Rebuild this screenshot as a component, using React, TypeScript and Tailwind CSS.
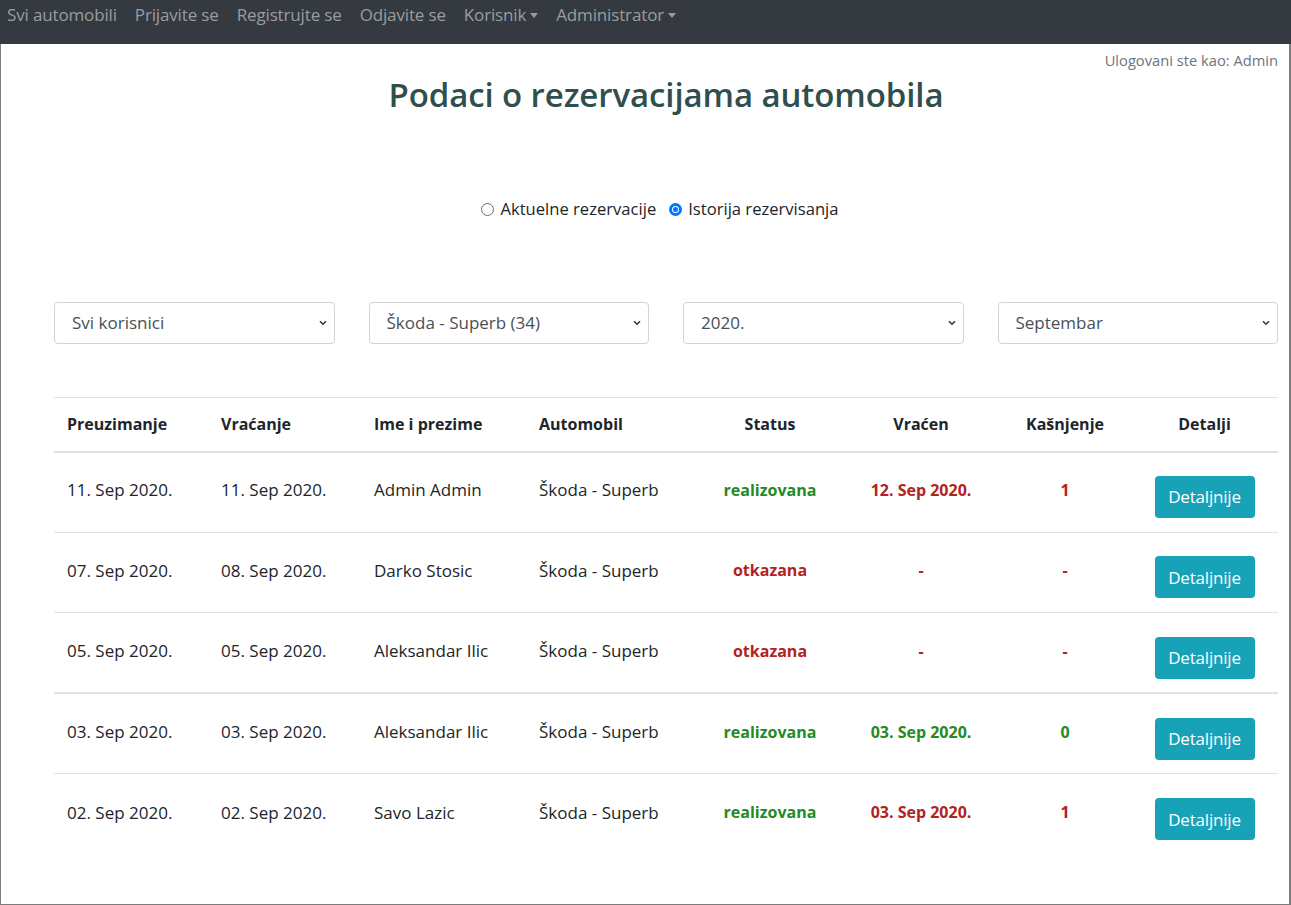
import React from "react";

const rows = [
  { from: "11. Sep 2020.", to: "11. Sep 2020.", name: "Admin Admin", status: "realizovana", returned: "12. Sep 2020.", late: "1", ok: false },
  { from: "07. Sep 2020.", to: "08. Sep 2020.", name: "Darko Stosic", status: "otkazana", returned: "-", late: "-", ok: false },
  { from: "05. Sep 2020.", to: "05. Sep 2020.", name: "Aleksandar Ilic", status: "otkazana", returned: "-", late: "-", ok: false },
  { from: "03. Sep 2020.", to: "03. Sep 2020.", name: "Aleksandar Ilic", status: "realizovana", returned: "03. Sep 2020.", late: "0", ok: true },
  { from: "02. Sep 2020.", to: "02. Sep 2020.", name: "Savo Lazic", status: "realizovana", returned: "03. Sep 2020.", late: "1", ok: false },
];

function Select({ value }: { value: string }) {
  return (
    <div className="relative">
      <select className="w-full h-[42px] appearance-none rounded-[4px] border border-[#ced4da] bg-white pl-[17px] text-[17px] text-[#495057]">
        <option>{value}</option>
      </select>
      <svg className="absolute right-[8px] top-[18px] pointer-events-none" width="8" height="6" viewBox="0 0 8 6">
        <path d="M1 1.2 L4 4.2 L7 1.2" fill="none" stroke="#343a40" strokeWidth="1.6" />
      </svg>
    </div>
  );
}

function Caret() {
  return <span className="inline-block ml-[4px] align-[3px] border-x-[4px] border-x-transparent border-t-[5px] border-t-[#9a9da0]" />;
}

export default function App() {
  return (
    <div className="bg-white h-[905px] flex flex-col" style={{ fontFamily: '"Open Sans", "Noto Sans", sans-serif' }}>
      <nav className="h-[44px] shrink-0 bg-[#343a40] flex items-start pl-[7px] gap-[18px] text-[17px] leading-[30px] text-[#9a9da0] tracking-[-0.15px]">
        <span>Svi automobili</span>
        <span>Prijavite se</span>
        <span>Registrujte se</span>
        <span>Odjavite se</span>
        <span>Korisnik<Caret /></span>
        <span>Administrator<Caret /></span>
      </nav>
      <main className="flex-1 border-l border-r-2 border-b border-[#7d7d7d] pl-[53px] pr-[11px]">
        <p className="mt-[6px] text-right text-[14.7px] leading-[20px] text-[#6c757d]">Ulogovani ste kao: Admin</p>
        <h1 className="mt-[5px] text-center text-[33px] leading-[40px] font-semibold text-[#2f4f4f] tracking-[-0.1px]">
          Podaci o rezervacijama automobila
        </h1>
        <div className="mt-[84px] flex justify-center items-center gap-[13px] text-[16.6px] leading-[20px] text-[#212529] pr-[12px]">
          <label className="flex items-center gap-[6px]">
            <span className="w-[13px] h-[13px] rounded-full border border-[#6b6b6b] bg-white" />
            Aktuelne rezervacije
          </label>
          <label className="flex items-center gap-[6px]">
            <span className="w-[13px] h-[13px] rounded-full bg-[#0075ff] flex items-center justify-center">
              <span className="w-[7px] h-[7px] rounded-full bg-white flex items-center justify-center">
                <span className="w-[5px] h-[5px] rounded-full bg-[#0075ff]" />
              </span>
            </span>
            Istorija rezervisanja
          </label>
        </div>
        <div className="mt-[83px] grid grid-cols-4 gap-x-[34px]">
          <Select value="Svi korisnici" />
          <Select value="Škoda - Superb (34)" />
          <Select value="2020." />
          <Select value="Septembar" />
        </div>
        <table className="mt-[53px] w-full table-fixed border-collapse text-[17px] text-[#212529]">
          <colgroup>
            <col className="w-[154px]" />
            <col className="w-[153px]" />
            <col className="w-[165px]" />
            <col className="w-[171px]" />
            <col className="w-[146px]" />
            <col className="w-[156px]" />
            <col className="w-[132px]" />
            <col className="w-[147px]" />
          </colgroup>
          <thead>
            <tr className="h-[54px] border-t border-[#dee2e6] border-b-2 font-bold text-[16px]">
              <th className="text-left pl-[13px]">Preuzimanje</th>
              <th className="text-left pl-[13px]">Vraćanje</th>
              <th className="text-left pl-[13px]">Ime i prezime</th>
              <th className="text-left pl-[13px]">Automobil</th>
              <th className="text-center">Status</th>
              <th className="text-center">Vraćen</th>
              <th className="text-center">Kašnjenje</th>
              <th className="text-center">Detalji</th>
            </tr>
          </thead>
          <tbody>
            {rows.map((r, i) => (
              <tr key={i} className={`h-[80.6px] border-[#dee2e6] ${i === 2 ? "border-b-2" : i === 4 ? "" : "border-b"}`}>
                <td className="pl-[13px] pb-[4px]">{r.from}</td>
                <td className="pl-[13px] pb-[4px]">{r.to}</td>
                <td className="pl-[13px] pb-[4px]">{r.name}</td>
                <td className="pl-[13px] pb-[4px]">Škoda - Superb</td>
                <td className={`text-center text-[16px] font-bold pb-[4px] ${r.status === "realizovana" ? "text-[#228b22]" : "text-[#b22222]"}`}>{r.status}</td>
                <td className={`text-center text-[16px] font-bold pb-[4px] ${r.ok ? "text-[#228b22]" : "text-[#b22222]"}`}>{r.returned}</td>
                <td className={`text-center text-[16px] font-bold pb-[4px] ${r.ok ? "text-[#228b22]" : "text-[#b22222]"}`}>{r.late}</td>
                <td className="text-center pt-[10px]">
                  <button className="w-[100px] h-[42px] rounded-[4px] bg-[#17a2b8] text-white text-[17px] tracking-[-0.2px]">Detaljnije</button>
                </td>
              </tr>
            ))}
          </tbody>
        </table>
      </main>
    </div>
  );
}
